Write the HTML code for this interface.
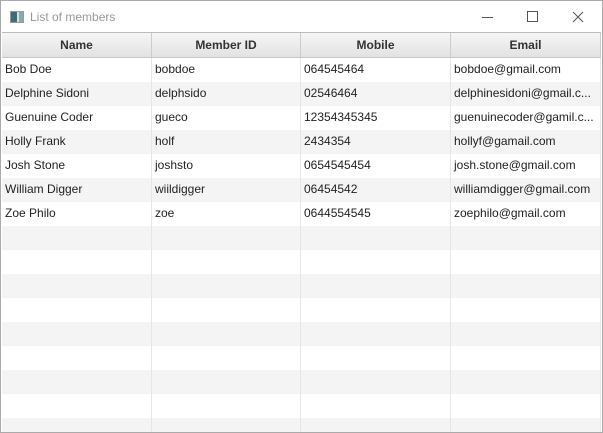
<!DOCTYPE html><html><head><style>
body{margin:0;width:603px;height:433px;overflow:hidden;background:#fff;font-family:"Liberation Sans",sans-serif}
.win{position:absolute;left:0;top:0;width:601px;height:431px;border:1px solid #aaa;background:#fff;overflow:hidden}
.title{position:absolute;left:0;top:0;width:601px;height:31px}
.title span{position:absolute;left:29px;top:9px;font-size:12px;color:#999}
.ico{position:absolute;left:9px;top:10px;width:12px;height:10px;border:1px solid #999;background:linear-gradient(90deg,#3a6f7a 0 6px,#ddd 6px 8px,#8aa 8px)}
.tb{position:absolute;top:0;height:31px}
.grid{position:absolute;left:1px;top:31px;width:599px;border-top:1px solid #bbb}
.hdr{display:flex;height:24px;background:linear-gradient(#f6f6f6,#e2e2e2);border-bottom:1px solid #c8c8c8}
.hdr div{box-sizing:border-box;border-right:1px solid #ccc;text-align:center;font-weight:bold;font-size:12px;line-height:24px;color:#333}
.row{display:flex;height:24px}
.row div{box-sizing:border-box;border-right:1px solid #e6e6e6;font-size:12px;line-height:23px;color:#222;padding-left:3px;white-space:nowrap;overflow:hidden}
.c1{width:150px}.c2{width:149px}.c3{width:150px}.c4{width:150px}
</style></head><body><div class="win">
<div class="title"><div class="ico"></div><span>List of members</span>
<svg class="tb" style="left:470px" width="130" height="31"><line x1="11" y1="16.5" x2="22" y2="16.5" stroke="#555"/><rect x="56.5" y="10.5" width="10" height="10" fill="none" stroke="#555"/><path d="M102 11l10 10M112 11l-10 10" stroke="#555"/></svg></div>
<div class="grid">
<div class="hdr"><div class="c1">Name</div><div class="c2">Member ID</div><div class="c3">Mobile</div><div class="c4">Email</div></div>
<div>
<div class="row" style="background:#fff"><div class="c1">Bob Doe</div><div class="c2">bobdoe</div><div class="c3">064545464</div><div class="c4">bobdoe@gmail.com</div></div>
<div class="row" style="background:#f4f4f4"><div class="c1">Delphine Sidoni</div><div class="c2">delphsido</div><div class="c3">02546464</div><div class="c4">delphinesidoni@gmail.c...</div></div>
<div class="row" style="background:#fff"><div class="c1">Guenuine Coder</div><div class="c2">gueco</div><div class="c3">12354345345</div><div class="c4">guenuinecoder@gamil.c...</div></div>
<div class="row" style="background:#f4f4f4"><div class="c1">Holly Frank</div><div class="c2">holf</div><div class="c3">2434354</div><div class="c4">hollyf@gamail.com</div></div>
<div class="row" style="background:#fff"><div class="c1">Josh Stone</div><div class="c2">joshsto</div><div class="c3">0654545454</div><div class="c4">josh.stone@gmail.com</div></div>
<div class="row" style="background:#f4f4f4"><div class="c1">William Digger</div><div class="c2">wiildigger</div><div class="c3">06454542</div><div class="c4">williamdigger@gmail.com</div></div>
<div class="row" style="background:#fff"><div class="c1">Zoe Philo</div><div class="c2">zoe</div><div class="c3">0644554545</div><div class="c4">zoephilo@gmail.com</div></div>
<div class="row" style="background:#f4f4f4"><div class="c1"></div><div class="c2"></div><div class="c3"></div><div class="c4"></div></div>
<div class="row" style="background:#fff"><div class="c1"></div><div class="c2"></div><div class="c3"></div><div class="c4"></div></div>
<div class="row" style="background:#f4f4f4"><div class="c1"></div><div class="c2"></div><div class="c3"></div><div class="c4"></div></div>
<div class="row" style="background:#fff"><div class="c1"></div><div class="c2"></div><div class="c3"></div><div class="c4"></div></div>
<div class="row" style="background:#f4f4f4"><div class="c1"></div><div class="c2"></div><div class="c3"></div><div class="c4"></div></div>
<div class="row" style="background:#fff"><div class="c1"></div><div class="c2"></div><div class="c3"></div><div class="c4"></div></div>
<div class="row" style="background:#f4f4f4"><div class="c1"></div><div class="c2"></div><div class="c3"></div><div class="c4"></div></div>
<div class="row" style="background:#fff"><div class="c1"></div><div class="c2"></div><div class="c3"></div><div class="c4"></div></div>
<div class="row" style="background:#f4f4f4"><div class="c1"></div><div class="c2"></div><div class="c3"></div><div class="c4"></div></div>
</div></div></div></body></html>
